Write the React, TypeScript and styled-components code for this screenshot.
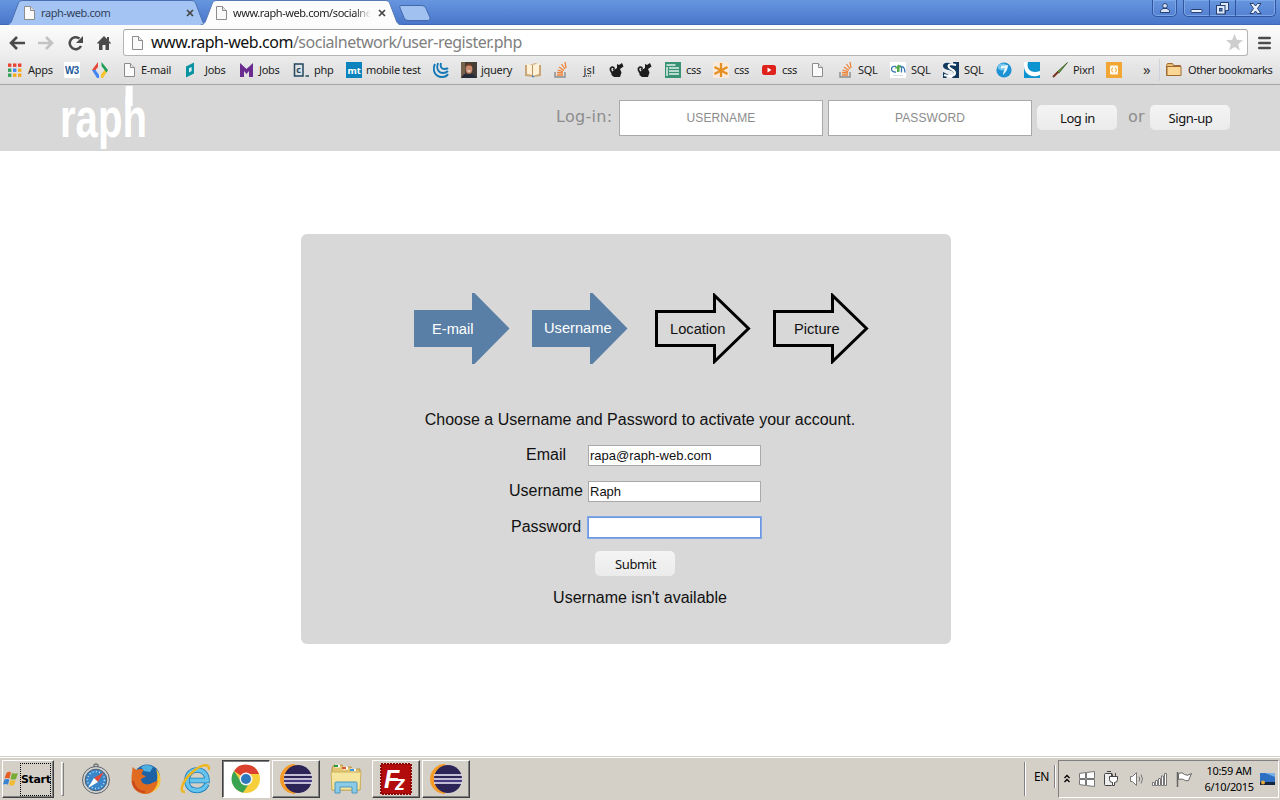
import React from 'react';
import styled, { createGlobalStyle } from 'styled-components';

const Global = createGlobalStyle`
  * { box-sizing: border-box; }
  body { margin: 0; background: #fff; overflow: hidden; }
  svg { display: block; flex: none; }
`;
const ui = `'Noto Sans', 'Open Sans', sans-serif`;
const arial = `'Liberation Sans', Arial, sans-serif`;

const Screen = styled.div`
  width: 1280px; height: 800px; display: flex; flex-direction: column;
`;

/* browser frame */
const TabStrip = styled.div`
  height: 25px; display: flex; align-items: flex-start; padding-left: 5px; flex: none;
  background: linear-gradient(#6796df, #4a76ca); border-bottom: 1px solid #4169b5;
`;
const TabBox = styled.div<{ $active?: boolean }>`
  display: grid; grid-template: 25px / 204px; width: 204px; flex: none;
  margin-left: ${p => (p.$active ? '-10px' : '0')};
  z-index: ${p => (p.$active ? 1 : 0)};
  > * { grid-area: 1 / 1; }
`;
const TabBody = styled.div<{ $active?: boolean }>`
  display: flex; align-items: center; height: 24px; padding: 1px 0 0 ${p => (p.$active ? 15 : 17)}px; z-index: 1;
`;
const TabTitle = styled.span<{ $active?: boolean }>`
  width: 145px; margin-left: 3px; white-space: nowrap;
  font: 11px/16px ${ui}; letter-spacing: -0.42px;
  color: ${p => (p.$active ? '#222' : '#33415c')};
  ${p => p.$active && 'mask-image: linear-gradient(90deg, #000 84%, transparent 95%);'}
`;
const NewTab = styled.div`margin: 5px 0 0 -5px;`;
const WindowControls = styled.div`display: flex; margin-left: auto; padding-right: 4px;`;
const ControlGroup = styled.div`
  display: flex; height: 17px; border: 1px solid #30569f; border-top: 0; border-radius: 0 0 5px 5px;
  box-shadow: inset 0 0 0 1px #7da6e8; margin-left: 6px; overflow: hidden;
`;
const Control = styled.div<{ $w: number }>`
  width: ${p => p.$w}px; display: flex; align-items: center; justify-content: center;
  & + & { border-left: 1px solid #30569f; }
`;
const Toolbar = styled.div`
  height: 32px; flex: none; display: flex; align-items: center; background: linear-gradient(#fcfcfc, #ececec);
  padding: 3px 8px 0 8px;
`;
const NavIcons = styled.div`display: flex; width: 115px; gap: 11.4px; align-items: center;`;
const AddressBar = styled.div`
  width: 1125px; height: 27px; display: flex; align-items: center; background: #fff;
  border: 1px solid #b5b5b5; border-top-color: #a2a2a2; border-radius: 3px; padding: 0 4px 0 6px;
`;
const Url = styled.div`
  flex: 1; margin-left: 5px; font: 16px/24px ${ui}; letter-spacing: -0.48px; color: #808080; white-space: nowrap; margin-top: -2px;
  b { font-weight: 400; color: #111; }
`;
const MenuIcon = styled.div`margin-left: 10px;`;
const Bookmarks = styled.div`
  height: 28px; flex: none; display: flex; align-items: center; padding: 0 0 1px 7px;
  background: linear-gradient(#ebebeb, #dcdcdc); border-bottom: 1px solid #a5a5a5;
`;
const BookmarkItem = styled.div<{ $w: number; $ls?: number; $gap?: number }>`
  width: ${p => p.$w}px; display: flex; gap: ${p => p.$gap ?? 4}px; align-items: center; flex: none; white-space: nowrap;
  font: 11px/16px ${ui}; letter-spacing: ${p => p.$ls ?? -0.3}px; color: #1c1c1c;
`;
const More = styled.div`width: 16px; font: 15px/16px ${ui}; color: #333; padding-bottom: 2px;`;
const Divider = styled.div`width: 1px; height: 22px; margin-right: 6px; background: #cdd3d8;`;

/* site */
const Site = styled.main`height: 671px; flex: none; background: #fff; display: flex; flex-direction: column;`;
const SiteHeader = styled.header`
  height: 66px; background: #d8d8d8; display: flex; align-items: flex-start; padding-left: 60px;
`;
const Logo = styled.svg`overflow: visible;`;
const LoginForm = styled.div`display: flex; margin-left: 406px; padding-top: 15px;`;
const GreyLabel = styled.span<{ $w: number; $pad?: number }>`
  width: ${p => p.$w}px; padding-left: ${p => p.$pad ?? 0}px; font: 16px/34px 'DejaVu Sans', Verdana, sans-serif;
  letter-spacing: 0.3px; color: #8d8d8d; white-space: nowrap;
`;
const LoginInput = styled.input`
  width: 204px; height: 36px; border: 1px solid #a9a9a9; background: #fff; margin-right: 5px; padding: 0;
  text-align: center; font: 12px ${arial}; letter-spacing: 0.1px; outline: 0;
  &::placeholder { color: #8c8c8c; opacity: 1; }
`;
const Button = styled.button`
  width: 80px; height: 25px; border: 0; border-radius: 5px; background: linear-gradient(#f4f4f4, #ebebeb);
  font: 13px/24px ${ui}; letter-spacing: -0.4px; color: #111; padding: 0 0 0 1px;
`;
const HeaderButton = styled(Button)`margin-top: 5px;`;
const Card = styled.section`
  width: 650px; height: 410px; margin: 83px 0 0 301px; border-radius: 6px; background: #d8d8d8;
  display: flex; flex-direction: column; padding-top: 59px; font: 16px/18px ${arial}; color: #111;
`;
const Steps = styled.div`display: flex; padding-left: 113px;`;
const StepSvg = styled.svg<{ $gap: number }>`
  margin-right: ${p => p.$gap}px;
  text { font: 14.67px ${arial}; }
`;
const Message = styled.p<{ $top: number }>`margin: ${p => p.$top}px 0 0 28px; text-align: center; height: 18px;`;
const Field = styled.label<{ $top: number }>`display: flex; height: 21px; margin-top: ${p => p.$top}px;`;
const FieldName = styled.span<{ $pad: number }>`width: 287px; padding: 1px 0 0 ${p => p.$pad}px;`;
const FieldInput = styled.input<{ $focus?: boolean }>`
  width: 173px; height: 21px; padding: 1px 1px; font: 13px ${arial}; color: #111; background: #fff;
  border: 1px solid ${p => (p.$focus ? '#6c96dd' : '#a9a9a9')}; outline: 0;
  ${p => p.$focus && 'box-shadow: 0 0 0 1px #82aae8;'}
`;
const SubmitButton = styled(Button)`margin: 13px 0 0 294px; flex: none;`;

/* desktop taskbar */
const Taskbar = styled.footer`
  height: 44px; flex: none; background: #d4d0c8; border-top: 1px solid #d4d0c8; box-shadow: inset 0 1px #fff;
  display: flex; align-items: flex-start; padding: 3px 1px 0 2px;
`;
const StartButton = styled.div`
  width: 52px; height: 38px; border: 1px solid; border-color: #fff #404040 #404040 #fff; box-shadow: inset -1px -1px #808080;
  display: flex; align-items: center; font: bold 11px/16px 'DejaVu Sans', sans-serif; letter-spacing: -0.35px; color: #000;
`;
const StartText = styled.span`width: 31px; height: 33px; border: 1px dotted #000; line-height: 31px; white-space: nowrap; margin-left: 2px;`;
const Grip = styled.div`width: 3px; height: 34px; margin: 2px 8px 0 7px; border: 1px solid; border-color: #fff #808080 #808080 #fff;`;
const TaskButton = styled.div<{ $kind?: 'raised' | 'pressed' }>`
  width: 48px; height: 38px; margin-right: 2px; display: flex; align-items: center; justify-content: center;
  border: 1px solid transparent;
  ${p => p.$kind === 'raised' && 'border-color: #fff #404040 #404040 #fff; box-shadow: inset -1px -1px #808080;'}
  ${p => p.$kind === 'pressed' && 'border-color: #404040 #fff #fff #404040; box-shadow: inset 1px 1px #808080; background: #fff;'}
`;
const TaskSpace = styled.div`flex: 1;`;
const TrayGrip = styled.div<{ $h: number }>`
  width: 2px; height: ${p => p.$h}px; margin-top: ${p => (p.$h < 30 ? 5 : 2)}px;
  border-left: 1px solid #808080; border-right: 1px solid #fff;
`;
const Language = styled.div`width: 28px; padding-left: 8px; font: 12px/34px ${ui}; letter-spacing: -0.3px; color: #000;`;
const Tray = styled.div`
  width: 221px; height: 38px; display: flex; align-items: center; gap: 8.2px; padding-left: 4px; margin-left: 2px;
  border: 1px solid; border-color: #808080 #fff #fff #808080;
`;
const Clock = styled.div`
  width: 54px; text-align: center; font: 11px/15.5px ${ui}; letter-spacing: -0.35px; color: #000; white-space: nowrap; margin: -1px -4px 0 2px;
`;

const Page = () => (
  <svg width="16" height="16" viewBox="0 0 16 16"><path d="M2.500 1.500h6l4 4v9h-10z" fill="#fafafa" stroke="#8c8c8c" /><path d="M8.500 1.500v4h4" fill="#e6e6e6" stroke="#8c8c8c" /></svg>
);
const Close = () => (
  <svg width="8" height="8" viewBox="0 0 8 8"><path d="M1 1l6 6M7 1L1 7" stroke="#444" strokeWidth="1.700" /></svg>
);
const TabShape = ({ active }: { active?: boolean }) => (
  <svg width="206" height="25" viewBox="0 0 206 25">
    <path d="M0 25.500C5 24.500 6 23 7 20L13 4C14 1.500 15 .5 18 .5H186C189 .5 190 1.500 191 4L197 20C198 23 199 24.500 204 25.500" fill={active ? '#fcfcfc' : '#a4c5f3'} stroke={active ? '#5679b5' : '#4a70b2'} />
  </svg>
);
const Sq = ({ children }: { children?: React.ReactNode }) => <svg width="16" height="16" viewBox="0 0 16 16">{children}</svg>;

const AppsIcon = () => (
  <Sq>{['#ea4335', '#ea4335', '#ea4335', '#34a05a', '#4285f4', '#f5a81c', '#34a05a', '#f5a81c', '#f5a81c'].map((c, i) => (
    <rect key={i} x={1 + (i % 3) * 5} y={1.500 + Math.floor(i / 3) * 5} width="3.400" height="3.400" fill={c} />))}</Sq>
);
const W3 = () => <Sq><rect width="16" height="16" rx="1" fill="#fff" /><text x="1" y="12" textLength="14" lengthAdjust="spacingAndGlyphs" fontFamily="Liberation Sans" fontWeight="700" fontSize="11.500" fill="#1c5a9c">W3</text></Sq>;
const Dev = () => <Sq><path d="M6 0v5L3.500 8H0z" fill="#e5493a" /><path d="M0 8h3.500L7 13v3H5z" fill="#4285f4" /><path d="M16 8l-5 8H9v-3.500L12.500 8z" fill="#f7c52b" /><path d="M9.500 0L16 8l-1.500 2.500L9.500 4z" fill="#1d9d58" /></Sq>;
const Lever = () => <Sq><path d="M1 4.500L9 .5v11L1 15.500z" fill="#0a94a2" /><path d="M4 6.200l2.600-1.200v4L4 10.400z" fill="#d9f1f2" /></Sq>;
const Monster = () => <Sq><path d="M1 1l6.500 6L14 1v14h-4V9l-2.500 3L5 9v6H1z" fill="#6b2c91" /></Sq>;
const CodeC = () => <Sq><rect x="1.500" y="2" width="8.500" height="12" fill="#dce3e8" stroke="#24455a" strokeWidth="1.500" /><text x="3.200" y="11" fontFamily="Noto Sans" fontSize="9" fontWeight="700" fill="#24455a">c</text><path d="M12.500 14h4" stroke="#24455a" strokeWidth="1.500" /></Sq>;
const Mt = () => <Sq><rect width="16" height="16" fill="#0b83bd" /><text x="1.500" y="11.500" textLength="13" fontFamily="Noto Sans" fontSize="9.500" fontWeight="700" fill="#fff">mt</text></Sq>;
const JQ = () => <Sq><g fill="none" stroke="#1479b8" strokeWidth="1.900"><path d="M2 2C-1 8 2 15 9 15c3 0 5-1 6-3" /><path d="M5 1C3 6 5 11 10 11c2 0 4-1 5-2" /><path d="M8 1c-1 3 0 6 3 6 2 0 3 0 4-1" /></g></Sq>;
const Portrait = () => <Sq><rect width="16" height="16" fill="#443d36" /><rect width="4" height="16" fill="#76634c" /><path d="M0 16l3-4h9l4 4z" fill="#252c37" /><ellipse cx="8" cy="7" rx="3.400" ry="4.800" fill="#c98a6b" /><path d="M4 5c1-5 7-5 8 0-2-2-6-2-8 0" fill="#6c3a26" /><path d="M6.500 9h3" stroke="#fff" /></Sq>;
const Book = () => <Sq><path d="M0 3h2l5-1 1 1 1-2 5 1v1h2v11l-7 1-9-1z" fill="#c9a675" /><path d="M2 1.500l5 1.500v10l-5-1zM8 3l6-2v11l-6 2z" fill="#fff1d8" /><path d="M7.500 3v11" stroke="#b99262" /><circle cx="8" cy="14.500" r="1" fill="#3484cf" /></Sq>;
const Stack = () => <Sq><path d="M2 10v5h10v-5" fill="none" stroke="#8c8c8c" strokeWidth="1.400" /><g stroke="#ef8235" strokeWidth="1.300"><path d="M4 13h6M4 10.500l6 .5M4.500 8l5.500 1.700M6 5l5 3.500M8.500 2l3.500 5M12 0l1 6" /></g></Sq>;
const Jsl = () => <Sq><text x="2.500" y="12" textLength="11" fontFamily="Noto Sans" fontSize="11" fill="#222">jsl</text><path d="M5 14h6" stroke="#222" strokeDasharray="1 1" /></Sq>;
const Cat = () => <Sq><path d="M8 6l0-4 2 1 3-2 1.500 3.500-3.500 2.500 1.500 3.500-1.500 4.500H5l-2.500-2c-.5-3 2-5 5.500-7z" fill="#1d1d1d" /><path d="M4.500 11C1 10 .5 6 3 5c3 0 2 3 1 2" fill="none" stroke="#1d1d1d" strokeWidth="1.700" /></Sq>;
const Form = () => <Sq><rect width="16" height="16" fill="#3a9276" /><path d="M1.500 3h9M4 6h10M4 9h10M4 12h10M2 5v9" stroke="#e3f3ec" strokeWidth="1.500" /></Sq>;
const Star6 = () => <Sq><rect width="16" height="16" fill="#f9eadb" /><path d="M8 1v14M1.500 5l13 7M14.500 5l-13 7" stroke="#e58f23" strokeWidth="2.300" /></Sq>;
const YT = () => <Sq><rect x="1" y="3" width="14" height="10" rx="2.500" fill="#df211c" /><path d="M6.500 5.500l4 2.500-4 2.500z" fill="#fff" /></Sq>;
const CM = () => <Sq><rect width="16" height="16" fill="#fff" /><path d="M6 4.500C0 3 0 10.500 6 10M8 10V5.500q3-3 3.500 0v5m0-5q3-2 3.500 5" fill="none" stroke="#3576b2" strokeWidth="1.300" /><path d="M4.500 6.500L8.500 2.500l3.500 3H9.500V10H7V6.500z" fill="#53a94b" /><path d="M3 13.500h10" stroke="#d7dfe7" /></Sq>;
const SIcon = () => <Sq><path d="M0 0h16v16H0z" fill="#e9edf0" /><path d="M0 4Q0 0 7 1L10 2V0h6v16H9l2-4q0-3-5-4Q0 7 0 4zM0 10q4 2 6 3l-3 3H0z" fill="#12385d" /><path d="M13 3Q6 1 5.500 4c0 3.500 6.500 3 6.500 7 0 3-5 4-11 2" fill="none" stroke="#fff" strokeWidth="2" /></Sq>;
const Globe7 = () => <Sq><circle cx="8" cy="8" r="7.600" fill="#1c91d4" /><ellipse cx="6.500" cy="5" rx="5" ry="3.500" fill="#75c5ed" /><path d="M5 4l7-1c0 4-2 7-5 10 0-3 1.500-5 2-7L5 6.500z" fill="#e6f6fd" /></Sq>;
const Moon = () => <Sq><rect width="16" height="16" fill="#0b94cf" /><path d="M4 0C2 7 7 12 16 9v4C7 17 0 11 0 4V0z" fill="#fff" /></Sq>;
const Brush = () => <Sq><path d="M15.500.5L7 11l-2-1z" fill="#679d3c" stroke="#365a23" strokeWidth=".8" /><path d="M6 10l-5 5" stroke="#79321f" strokeWidth="2" /></Sq>;
const Curly = () => <Sq><rect width="16" height="16" fill="#f2a735" /><rect x="4" y="3.500" width="8" height="9" rx="1" fill="#fff8e9" /><path d="M7 6q-1 0-1 1t-.7 1q.7 0 .7 1t1 1M9 6q1 0 1 1t.7 1q-.7 0-.7 1t-1 1" fill="none" stroke="#f2a735" /></Sq>;
const Folder = () => <Sq><path d="M.5 3.500l1-2h5l1 2h7v10H.5z" fill="#e9bf71" stroke="#a16a34" /><path d="M1 4.500h14v9H1z" fill="#fbd796" stroke="#a16a34" /></Sq>;

const bookmarks: [React.ComponentType, string, number, number?][] = [
  [AppsIcon, 'Apps', 57, 5], [W3, '', 28], [Dev, '', 30], [Page, 'E-mail', 63, 3], [Lever, 'Jobs', 54], [Monster, 'Jobs', 54],
  [CodeC, 'php', 53, 5], [Mt, 'mobile test', 87], [JQ, '', 28], [Portrait, 'jquery', 64], [Book, '', 28], [Stack, '', 28],
  [Jsl, '', 28], [Cat, '', 28], [Cat, '', 28], [Form, 'css', 48, 5], [Star6, 'css', 48, 5], [YT, 'css', 49, 5], [Page, '', 28],
  [Stack, 'SQL', 52], [CM, 'SQL', 53, 5], [SIcon, 'SQL', 53, 5], [Globe7, '', 28], [Moon, '', 28], [Brush, 'Pixrl', 54, 5], [Curly, '', 37],
];

const Step = ({ label, filled, gap, x, y = 41 }: { label: string; filled?: boolean; gap: number; x: number; y?: number }) => (
  <StepSvg $gap={gap} width="96" height="71" viewBox="0 0 96 71">
    {filled
      ? <path d="M0 17H58V0H60.500L95.500 35.500 60.500 71H58V54H0z" fill="#5a7fa6" />
      : <path d="M1.500 18.500H59.500V2.500L93.500 35.500 59.500 68.500V52.500H1.500z" fill="none" stroke="#000" strokeWidth="3" />}
    <text x={x} y={y} fill={filled ? '#fff' : '#111'}>{label}</text>
  </StepSvg>
);

const Compass = () => <svg width="30" height="32" viewBox="0 0 30 32"><circle cx="15" cy="3" r="2" fill="none" stroke="#777" strokeWidth="1.500" /><circle cx="15" cy="17" r="13.500" fill="#d0d3d6" stroke="#5d6268" /><circle cx="15" cy="17" r="10.800" fill="#3a86cb" stroke="#525c67" /><circle cx="15" cy="17" r="8.500" fill="none" stroke="#bfe0f5" strokeWidth="1.500" strokeDasharray="1 2.300" /><path d="M23 9l-6 10-4-4z" fill="#e14a35" /><path d="M7 25l6-10 4 4z" fill="#fff" /></svg>;
const Firefox = () => (
  <svg width="32" height="32" viewBox="0 0 32 32">
    <circle cx="17" cy="14.500" r="13" fill="#1e62a5" /><path d="M11 4q6-4 12 0l-3 5-6-1z" fill="#4fb0e0" />
    <path d="M26 6c6 6 6 15 1 20-4 4-10 5-14 4l8-4c6-4 8-11 5-20z" fill="#f7c53a" />
    <path d="M2.500 4l4 3q4-2 7 0l-2 4 4.500 2.500-5 2.500c0 5 6 7 11 4 3-2 5-1 6-3-1 8-6 14-12 14C6 31 1 24 1.500 16c0-5 1-8 1-12z" fill="#e06a20" />
    <path d="M3 18c1 7 6 11 12 11" fill="none" stroke="#c8451d" strokeWidth="2" />
  </svg>
);
const IE = () => <svg width="32" height="32" viewBox="0 0 32 32"><path d="M27 21c-2 4-6 6.500-10 6.500-6 0-10-4-10-10s4-10.500 10-10.500 10 4 10 10.500H10" fill="none" stroke="#1b7fb9" strokeWidth="5.500" /><path d="M27 21c-2 4-6 6.500-10 6.500-6 0-10-4-10-10s4-10.500 10-10.500 10 4 10 10.500H10" fill="none" stroke="#66c3ee" strokeWidth="3.800" /><path d="M5 29C-2 30 3 17 12 9.500 20 2 30-1 29 7" fill="none" stroke="#efb51c" strokeWidth="2.400" /></svg>;
const Chrome = () => <svg width="30" height="30" viewBox="0 0 30 30"><circle cx="15" cy="15" r="14" fill="#f7cf3c" /><path d="M15 15L3 7a14 14 0 0 1 25 3H15z" fill="#dc4130" /><path d="M3 7a14 14 0 0 0 9 21.700L19 18l-8 1z" fill="#3aa451" /><circle cx="15" cy="15" r="6.500" fill="#f5f5f5" /><circle cx="15" cy="15" r="5" fill="#2d79bd" /></svg>;
const Eclipse = () => <svg width="34" height="30" viewBox="0 0 34 30"><path d="M16 1A14 14 0 0 0 16 29C8 26 8 4 16 1" fill="#f59b28" stroke="#f59b28" strokeWidth="2" /><circle cx="19" cy="15" r="14" fill="#2c2356" /><path d="M5 11h28M5 15h28M5 19h28" stroke="#f4f1fb" strokeWidth="1.600" /><path d="M5 17h28" stroke="#4f4290" strokeWidth="1.500" /></svg>;
const Explorer = () => <svg width="32" height="32" viewBox="0 0 32 32"><path d="M2 5l2-3h8l2 2h7l2 2h7v21H2z" fill="#e2c571" stroke="#b29445" /><path d="M5 3h5M13 5h5M21 7h5" stroke="#fff" strokeWidth="3" /><path d="M4 3h4" stroke="#279d43" strokeWidth="2" /><path d="M12 5h4" stroke="#dc5535" strokeWidth="2" /><path d="M20 7h4" stroke="#3799e4" strokeWidth="2" /><path d="M1 9h30l-1 18H2z" fill="#f6e59c" stroke="#ccb05c" /><path d="M5 30V20q0-1 1-1h20q1 0 1 1v10h-5v-6H10v6z" fill="#8bcbe7" stroke="#4d97be" /></svg>;
const FileZilla = () => <svg width="32" height="32" viewBox="0 0 32 32"><rect x="1" y="1" width="30" height="30" fill="#b30c0c" stroke="#8d0808" strokeWidth="2" strokeDasharray="2 1" /><g fontFamily="Liberation Sans" fontWeight="700" fontStyle="italic" fill="#fff"><text x="4" y="25" fontSize="25">F</text><text x="15" y="27" fontSize="20">z</text></g></svg>;
const WinFlag = () => <svg width="15" height="16" viewBox="0 0 15 16"><path d="M3.500 2q2-2 4.500-.5L6.500 7.500Q4 6.500 1.500 7.500z" fill="#e85d26" /><path d="M9 2q3 1 6 0l-2 6q-3 1-5.500 0z" fill="#78ac37" /><path d="M1.500 8.500q2.500-1 4.800 0l-1.300 5q-2.500-1-5 0z" fill="#3a83d1" /><path d="M7.300 9q3 1 5.500 0l-1.800 5q-2 1-5 0z" fill="#f2ba30" /></svg>;

export default function App() {
  return (
    <Screen>
      <Global />
      <TabStrip>
        <TabBox><TabShape /><TabBody><Page /><TabTitle>raph-web.com</TabTitle><Close /></TabBody></TabBox>
        <TabBox $active><TabShape active /><TabBody $active><Page /><TabTitle $active>www.raph-web.com/socialne</TabTitle><Close /></TabBody></TabBox>
        <NewTab><svg width="34" height="16" viewBox="0 0 34 16"><path d="M3 .5H24q3 0 4 3l4 9q1 3-2 3H10q-3 0-4-3L2 3Q1 .5 3 .5z" fill="#a1c2f1" stroke="#4269aa" /></svg></NewTab>
        <WindowControls>
          <ControlGroup><Control $w={23}><svg width="12" height="12" viewBox="0 0 12 12"><path d="M1.500 10.500V8.500L4 6.500h4l2.500 2v2z" fill="#d9e6fa" stroke="#27406f" /><circle cx="6" cy="3.800" r="2.300" fill="#d9e6fa" stroke="#27406f" /></svg></Control></ControlGroup>
          <ControlGroup>
            <Control $w={25}><svg width="13" height="12" viewBox="0 0 13 12"><rect x="1" y="7.500" width="11" height="3" rx="1" fill="#e8f0fc" stroke="#27406f" /></svg></Control>
            <Control $w={26}><svg width="13" height="13" viewBox="0 0 13 13"><path d="M4.500.5h8v8h-3v3h-9v-8h4z" fill="#dce8fb" stroke="#27406f" /><rect x=".5" y="3.500" width="8.500" height="8.500" fill="#dce8fb" stroke="#27406f" /><rect x="3.500" y="6.500" width="2.500" height="2.500" fill="#5580c8" stroke="#27406f" /></svg></Control>
            <Control $w={40}><svg width="13" height="11" viewBox="0 0 13 11"><path d="M1 .5h3.500l2 2.500 2-2.500H12L8.500 5.500 12 10.500H8.500l-2-2.500-2 2.500H1l3.500-5z" fill="#e8f0fc" stroke="#27406f" /></svg></Control>
          </ControlGroup>
        </WindowControls>
      </TabStrip>
      <Toolbar>
        <NavIcons>
          <svg width="18" height="16" viewBox="0 0 18 16"><path d="M17 8H4M9 2L3 8l6 6" fill="none" stroke="#4a4a4a" strokeWidth="2.600" /></svg>
          <svg width="18" height="16" viewBox="0 0 18 16"><path d="M1 8h13M9 2l6 6-6 6" fill="none" stroke="#c3c3c3" strokeWidth="2.600" /></svg>
          <svg width="18" height="16" viewBox="0 0 18 16"><path d="M14 11A6 6 0 1 1 12.500 3.500" fill="none" stroke="#4a4a4a" strokeWidth="2.500" /><path d="M16 1v7H9z" fill="#4a4a4a" /></svg>
          <svg width="16" height="16" viewBox="0 0 16 16"><path d="M8 1l7 7-1 1-1-1v7H9.500v-5h-3v5H3V8L2 9 1 8zM11 2h2v4l-2-2z" fill="#4a4a4a" /></svg>
        </NavIcons>
        <AddressBar>
          <Page />
          <Url style={undefined}><b>www.raph-web.com</b>/socialnetwork/user-register.php</Url>
          <svg width="17" height="17" viewBox="0 0 17 17"><path d="M8.500 0l2.300 5.800 6.200.4-4.800 4 1.600 6.300-5.300-3.500-5.300 3.500 1.600-6.300-4.800-4 6.200-.4z" fill="#cecece" /></svg>
        </AddressBar>
        <MenuIcon><svg width="13" height="14" viewBox="0 0 13 14"><path d="M1.300 2h10.400M1.300 7h10.400M1.300 12h10.400" stroke="#4c4c4c" strokeWidth="2.600" strokeLinecap="round" /></svg></MenuIcon>
      </Toolbar>
      <Bookmarks>
        {bookmarks.map(([Icon, label, w, gap], i) => <BookmarkItem key={i} $w={w} $gap={gap}><Icon />{label}</BookmarkItem>)}
        <More>»</More><Divider />
        <BookmarkItem $w={106} $ls={-0.45} $gap={6}><Folder />Other bookmarks</BookmarkItem>
      </Bookmarks>
      <Site>
        <SiteHeader>
          <Logo width="90" height="66" viewBox="0 0 90 66">
            <text x="0" y="52" textLength="87" lengthAdjust="spacingAndGlyphs" fontFamily="Liberation Sans" fontWeight="700" fontSize="55" fill="#fff">raph</text>
            <rect x="65.600" y="1" width="7" height="20" fill="#fff" />
          </Logo>
          <LoginForm>
            <GreyLabel $w={63}>Log-in:</GreyLabel>
            <LoginInput placeholder="USERNAME" /><LoginInput placeholder="PASSWORD" />
            <HeaderButton>Log in</HeaderButton><GreyLabel $w={33} $pad={11}>or</GreyLabel><HeaderButton>Sign-up</HeaderButton>
          </LoginForm>
        </SiteHeader>
        <Card>
          <Steps>
            <Step label="E-mail" filled gap={22} x={18} />
            <Step label="Username" filled gap={27} x={12} y={40} />
            <Step label="Location" gap={22} x={15} />
            <Step label="Picture" gap={0} x={21} />
          </Steps>
          <Message $top={47}>Choose a Username and Password to activate your account.</Message>
          <Field $top={16}><FieldName $pad={225}>Email</FieldName><FieldInput defaultValue="rapa@raph-web.com" /></Field>
          <Field $top={15}><FieldName $pad={208}>Username</FieldName><FieldInput defaultValue="Raph" /></Field>
          <Field $top={15}><FieldName $pad={210}>Password</FieldName><FieldInput $focus type="password" /></Field>
          <SubmitButton>Submit</SubmitButton>
          <Message $top={13}>Username isn't available</Message>
        </Card>
      </Site>
      <Taskbar>
        <StartButton><WinFlag /><StartText>Start</StartText></StartButton>
        <Grip />
        <TaskButton><Compass /></TaskButton>
        <TaskButton><Firefox /></TaskButton>
        <TaskButton><IE /></TaskButton>
        <TaskButton $kind="pressed"><Chrome /></TaskButton>
        <TaskButton $kind="raised"><Eclipse /></TaskButton>
        <TaskButton><Explorer /></TaskButton>
        <TaskButton $kind="raised"><FileZilla /></TaskButton>
        <TaskButton $kind="raised"><Eclipse /></TaskButton>
        <TaskSpace />
        <TrayGrip $h={34} /><Language>EN</Language><TrayGrip $h={23} />
        <Tray>
          <svg width="8" height="10" viewBox="0 0 8 10"><path d="M1.500 4L4 1.500l2.500 2.500M1.500 8L4 5.500l2.500 2.500" fill="none" stroke="#000" strokeWidth="1.300" /></svg>
          <svg width="16" height="16" viewBox="0 0 16 16"><path d="M.5 2.500l6-1v6h-6zM7.500 1.500l8-1v7h-8zM.5 8.500h6v6l-6-1zM7.500 8.500h8v7l-8-1z" fill="#fff" stroke="#777" /></svg>
          <svg width="16" height="16" viewBox="0 0 16 16"><rect x="1.500" y="2.500" width="8" height="12" rx="1" fill="#eee" stroke="#444" /><path d="M4 .5h4M6.500 5.500h8v3q0 3-3 3v3h-2v-3q-3 0-3-3zM8.500 2v3M12.500 2v3" fill="#fff" stroke="#444" /></svg>
          <svg width="16" height="16" viewBox="0 0 16 16"><path d="M2.500 5.500h2l4-4v13l-4-4h-2z" fill="#fff" stroke="#777" /><path d="M11 5.500q1.500 2.500 0 5M13 3.500q3 4.500 0 9" fill="none" stroke="#777" /></svg>
          <svg width="16" height="16" viewBox="0 0 16 16"><path d="M.5 11.500h2v3h-2zM3.500 9.500h2v5h-2zM6.500 7.500h2v7h-2zM9.500 5h2v9.500h-2zM12.500 2.500h2v12h-2z" fill="#fff" stroke="#777" /></svg>
          <svg width="16" height="16" viewBox="0 0 16 16"><path d="M1.500 1v15" stroke="#666" strokeWidth="1.500" /><path d="M2.500 2.500q4-2 6 1 3 2 7-1l-3 7q-3 1-5-1-2-1-5 0z" fill="#fff" stroke="#666" /></svg>
          <Clock>10:59 AM<br />6/10/2015</Clock>
          <svg width="15" height="14" viewBox="0 0 15 14"><rect x="0" y="1" width="15" height="9" fill="#2d6fc2" /><path d="M5 1h10v4z" fill="#78aee8" /><rect y="10" width="15" height="3" fill="#15233e" /><circle cx="3" cy="10.500" r="2" fill="#e5a93c" /></svg>
        </Tray>
      </Taskbar>
    </Screen>
  );
}
